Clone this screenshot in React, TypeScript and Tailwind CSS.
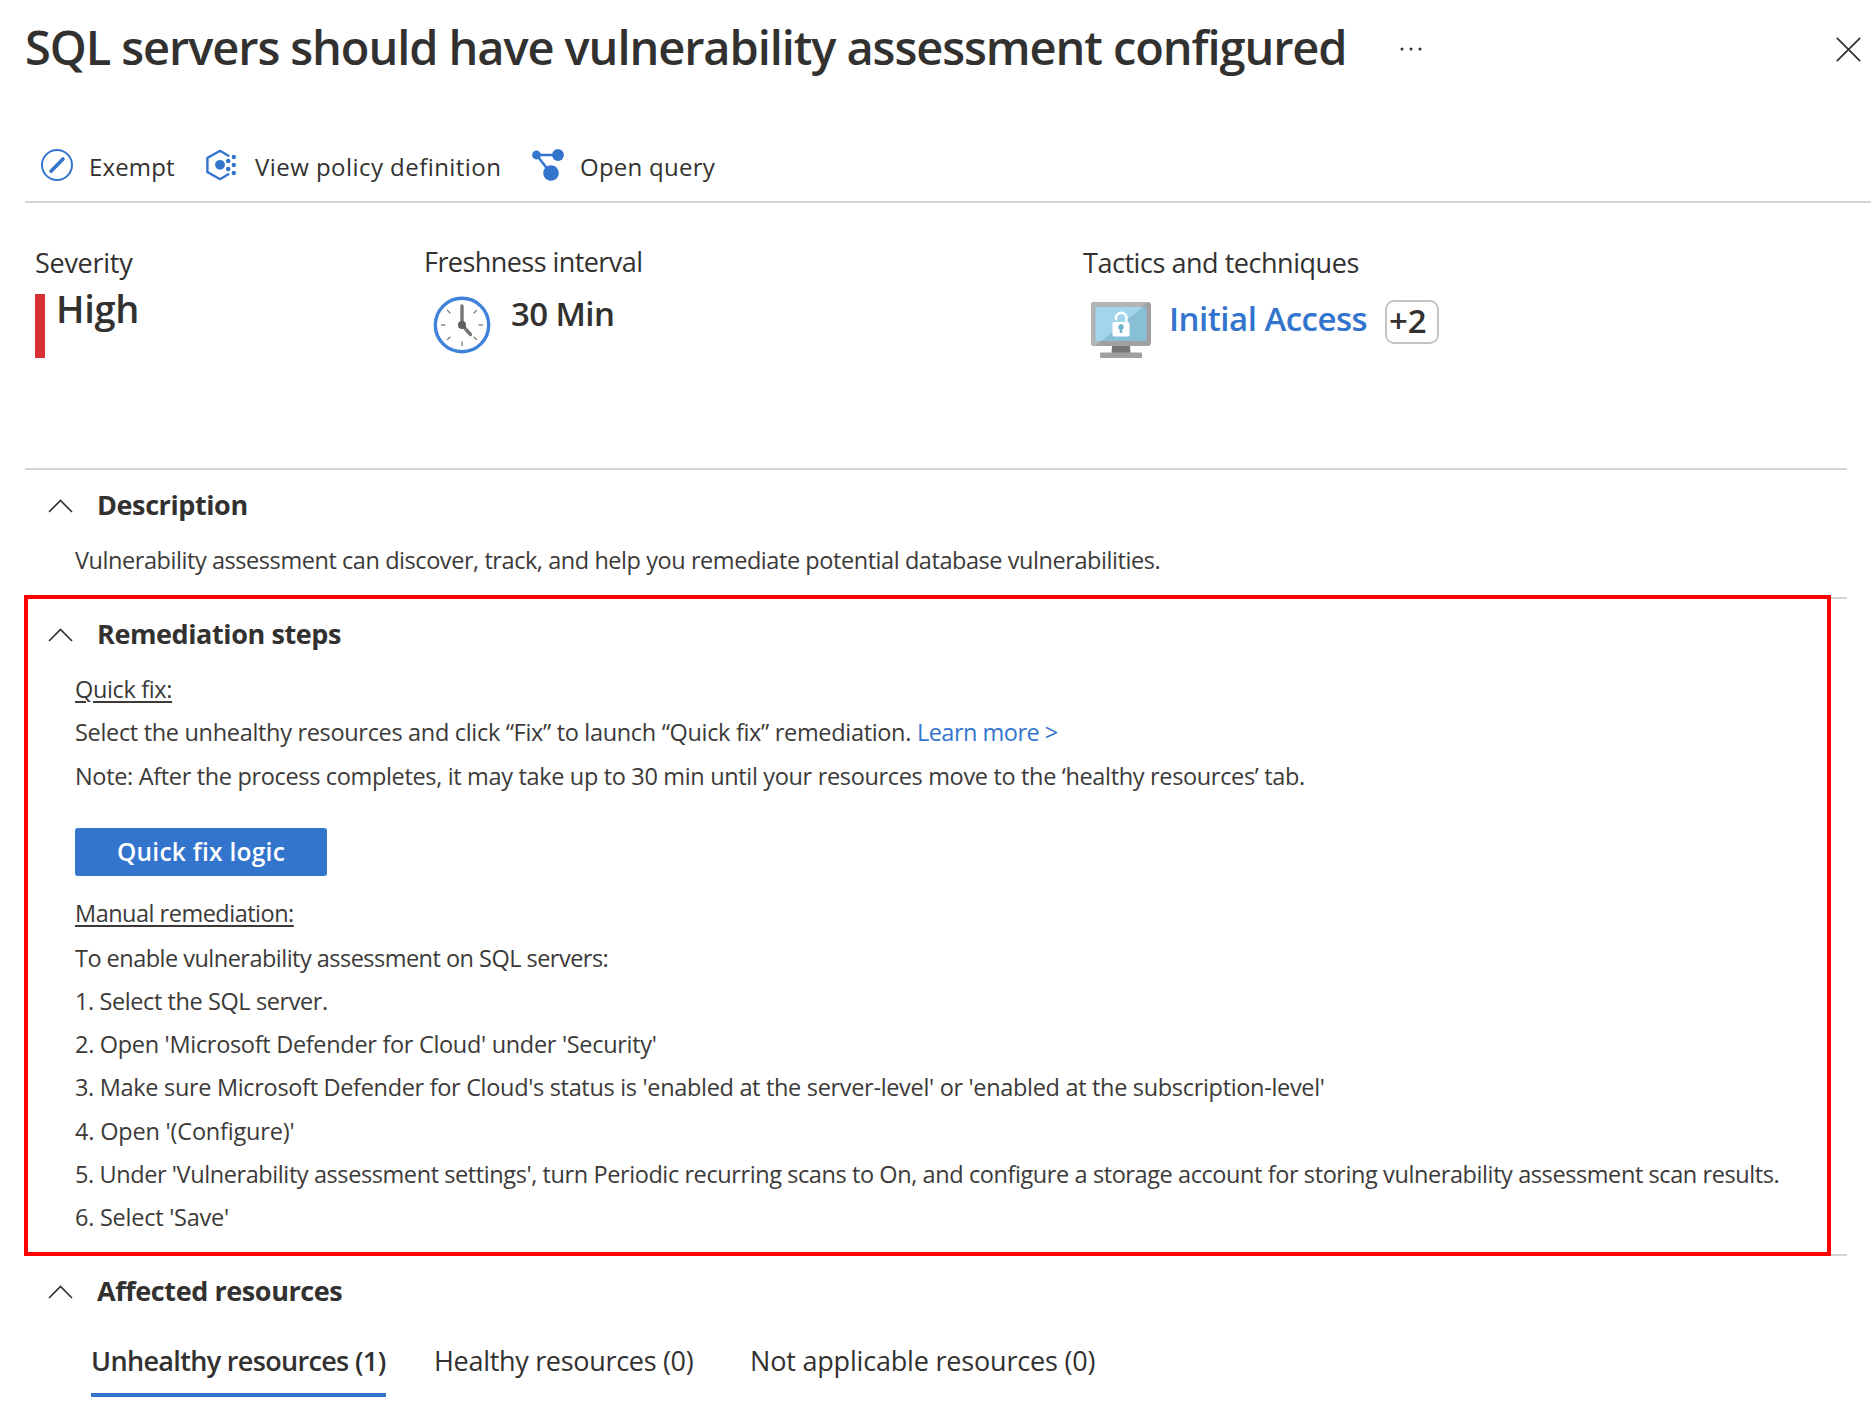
import React from "react";

function ExemptIcon() {
  return (
    <svg width="32" height="32" viewBox="0 0 32 32" fill="none">
      <circle cx="16" cy="16" r="15" stroke="#3375cd" strokeWidth="2" />
      <path d="M10 22.2 22 10" stroke="#3375cd" strokeWidth="3.6" strokeLinecap="round" />
    </svg>
  );
}

function PolicyIcon() {
  return (
    <svg width="32" height="32" viewBox="0 0 32 32" fill="none">
      <path d="M24.2 7.2 15 1.8 2.4 9v14L15 30.2l9.2-5.4" stroke="#3375cd" strokeWidth="2.4" />
      <g fill="#3375cd">
        <circle cx="15" cy="15.8" r="4.9" />
        <circle cx="23.2" cy="12" r="2.3" />
        <circle cx="23.2" cy="20" r="2.3" />
        <circle cx="28.8" cy="8" r="2.2" />
        <circle cx="28.8" cy="16" r="2.2" />
        <circle cx="28.8" cy="24" r="2.2" />
      </g>
    </svg>
  );
}

function QueryIcon() {
  return (
    <svg width="32" height="32" viewBox="0 0 32 32" fill="none">
      <path d="M4.5 6H26M5 6.5 18.5 24" stroke="#3375cd" strokeWidth="2.4" />
      <g fill="#3375cd">
        <circle cx="4.5" cy="6" r="4.4" />
        <circle cx="26" cy="6" r="5.9" />
        <circle cx="19" cy="24" r="7.8" />
      </g>
    </svg>
  );
}

function ClockIcon() {
  const ticks = [45, 90, 135, 180, 225, 270, 315];
  return (
    <svg width="58" height="58" viewBox="0 0 58 58" fill="none">
      <circle cx="29" cy="29" r="26.7" stroke="#3f82d9" strokeWidth="3.4" />
      {ticks.map((a) => (
        <path key={a} d="M29 8v4.5" stroke="#767676" strokeWidth="1.3" transform={`rotate(${a} 29 29)`} />
      ))}
      <path d="M29 10v19l8.500 9.500" stroke="#767676" strokeWidth="3.4" strokeLinecap="round" strokeLinejoin="round" />
      <circle cx="29" cy="29" r="4" fill="#5f5f5f" />
    </svg>
  );
}

function MonitorIcon() {
  return (
    <svg width="60" height="56" viewBox="0 0 60 56" fill="none">
      <rect width="60" height="44" rx="3" fill="#a0a0a0" />
      <path d="M3 0h54L4 44H3a3 3 0 0 1-3-3V3a3 3 0 0 1 3-3Z" fill="#b3b3b3" />
      <rect x="4.5" y="5" width="51" height="34" fill="#86bfd6" />
      <path d="M4.5 5H51.500L10.500 39h-6Z" fill="#a3d6ea" />
      <path d="M21 44h18l.5 7h-19Z" fill="#767676" />
      <rect x="9" y="50.5" width="42" height="5.5" rx="1" fill="#a0a0a0" />
      <path d="M25 17v-1a5.200 5.200 0 0 1 10.400 0v6" stroke="#fff" strokeWidth="2.4" strokeLinecap="round" />
      <rect x="21.5" y="20" width="17" height="14.5" rx="1.5" fill="#fff" />
      <path d="M30 22a3 3 0 0 1 1.300 5.600V31h-2.600v-3.400A3 3 0 0 1 30 22Z" fill="#6fb2cc" />
    </svg>
  );
}

function Chevron() {
  return (
    <svg className="mt-[15px] ml-[23px] shrink-0" width="25" height="14" viewBox="0 0 25 14" fill="none">
      <path d="M1 13 12.500 1.500 24 13" stroke="#323130" strokeWidth="1.6" />
    </svg>
  );
}

function SectionHeading({ children }: { children: React.ReactNode }) {
  return (
    <div className="flex h-10 items-start">
      <Chevron />
      <h2 className="mt-px ml-6 text-[27px] leading-10 font-bold tracking-[-0.41px]">{children}</h2>
    </div>
  );
}

const steps = [
  { text: "To enable vulnerability assessment on SQL servers:", tracking: "tracking-[-0.52px]" },
  { text: "1. Select the SQL server.", tracking: "tracking-[-0.41px]" },
  { text: "2. Open 'Microsoft Defender for Cloud' under 'Security'", tracking: "tracking-[-0.31px]" },
  {
    text: "3. Make sure Microsoft Defender for Cloud's status is 'enabled at the server-level' or 'enabled at the subscription-level'",
    tracking: "tracking-[-0.32px]",
  },
  { text: "4. Open '(Configure)'", tracking: "tracking-[-0.19px]" },
  {
    text: "5. Under 'Vulnerability assessment settings', turn Periodic recurring scans to On, and configure a storage account for storing vulnerability assessment scan results.",
    tracking: "tracking-[-0.41px]",
  },
  { text: "6. Select 'Save'", tracking: "tracking-[-0.25px]" },
];

export default function App() {
  return (
    <div className="flex h-[1409px] w-[1871px] flex-col overflow-hidden bg-white pl-[25px] font-['Open_Sans',sans-serif] whitespace-nowrap text-[#323130]">
      <header className="flex h-[130px] items-start pt-[17px]">
        <h1 className="w-[1374px] text-[47px] leading-[60px] font-semibold tracking-[-1.09px]">
          SQL servers should have vulnerability assessment configured
        </h1>
        <svg className="mt-[30px]" width="26" height="4" viewBox="0 0 26 4" fill="#323130">
          <circle cx="3" cy="2" r="1.5" />
          <circle cx="12" cy="2" r="1.5" />
          <circle cx="21" cy="2" r="1.5" />
        </svg>
        <svg className="mt-5 mr-[10px] ml-auto" width="25" height="25" viewBox="0 0 25 25" fill="none">
          <path d="m.8.8 23.400 23.400M24.200.8.8 24.200" stroke="#323130" strokeWidth="1.7" />
        </svg>
      </header>

      <nav className="flex h-[73px] items-start border-b-2 border-[#d4d4d4] pt-[19px] pl-4 text-[24px] leading-9">
        <ExemptIcon />
        <span className="ml-4 w-[116px] tracking-[0.15px]">Exempt</span>
        <PolicyIcon />
        <span className="ml-[18px] w-[277px] tracking-[0.45px]">View policy definition</span>
        <QueryIcon />
        <span className="ml-4 tracking-[0.25px]">Open query</span>
      </nav>

      <section className="flex h-[265px] items-start pt-[42px] text-[27px] leading-9">
        <div className="w-[389px] pl-[10px]">
          <div className="tracking-[-0.28px]">Severity</div>
          <div className="mt-[13px] flex h-16 border-l-[10px] border-[#d83131] pl-[11px] text-[38px] leading-[28px] font-semibold tracking-[-0.3px]">
            High
          </div>
        </div>
        <div className="-mt-px w-[659px] pl-[10px]">
          <div className="tracking-[-0.56px]">Freshness interval</div>
          <div className="mt-4 flex pl-[9px]">
            <ClockIcon />
            <span className="ml-5 text-[33px] leading-9 font-semibold tracking-[-0.6px]">30 Min</span>
          </div>
        </div>
        <div className="pl-[10px]">
          <div className="tracking-[-0.46px]">Tactics and techniques</div>
          <div className="mt-[19px] flex pl-2">
            <div className="mt-0.5">
              <MonitorIcon />
            </div>
            <a className="ml-[18px] w-[216px] text-[33px] leading-[38px] font-semibold tracking-[-0.5px] text-[#3375cd]">
              Initial Access
            </a>
            <span className="h-11 w-[54px] rounded-[9px] border-2 border-[#c4c4c4] pl-0.5 text-[33px] leading-[38px] font-semibold">
              +2
            </span>
          </div>
        </div>
      </section>

      <section className="mr-6 h-[127px] border-t-2 border-[#d4d4d4] pt-[14px]">
        <SectionHeading>Description</SectionHeading>
        <p className="mt-[15px] pl-[50px] text-[23.5px] leading-[43.2px] tracking-[-0.436px] text-[#3b3a39]">
          Vulnerability assessment can discover, track, and help you remediate potential database vulnerabilities.
        </p>
      </section>

      <div className="mt-0.5 mr-6 h-[659px] border-y-2 border-[#d4d4d4]">
        <section className="-mt-1 -ml-px h-[661px] w-[1807px] border-4 border-[#ff0000] bg-white pt-[14px]">
          <div className="-ml-[3px]">
            <SectionHeading>Remediation steps</SectionHeading>
            <div className="pt-[15px] pl-[50px] text-[23.5px] leading-[43.2px] text-[#3b3a39]">
              <p className="tracking-[-0.36px] underline decoration-2 underline-offset-[3px]">Quick fix:</p>
              <p className="tracking-[-0.32px]">
                Select the unhealthy resources and click “Fix” to launch “Quick fix” remediation.{" "}
                <a className="tracking-[-0.5px] text-[#3375cd]">Learn more &gt;</a>
              </p>
              <p className="mt-px tracking-[-0.337px]">
                Note: After the process completes, it may take up to 30 min until your resources move to the ‘healthy resources’ tab.
              </p>
              <button className="mt-[29px] block h-12 w-[252px] rounded-[3px] bg-[#3375cd] text-center text-[24.5px] leading-[46px] font-semibold tracking-[0.27px] text-white">
                Quick fix logic
              </button>
              <p className="mt-4 tracking-[-0.5px] underline decoration-2 underline-offset-[3px]">Manual remediation:</p>
              <div className="mt-0.5">
                {steps.map((s) => (
                  <p key={s.text} className={s.tracking}>
                    {s.text}
                  </p>
                ))}
              </div>
            </div>
          </div>
        </section>
      </div>

      <section className="pt-[14px]">
        <SectionHeading>Affected resources</SectionHeading>
        <div className="mt-[33px] flex h-[54px] pl-[66px] text-[27px] leading-9">
          <div className="mr-12 w-[295px] border-b-4 border-[#3375cd] font-semibold tracking-[-0.66px]">Unhealthy resources (1)</div>
          <div className="w-[316px] tracking-[-0.31px]">Healthy resources (0)</div>
          <div className="tracking-[-0.19px]">Not applicable resources (0)</div>
        </div>
      </section>
    </div>
  );
}
